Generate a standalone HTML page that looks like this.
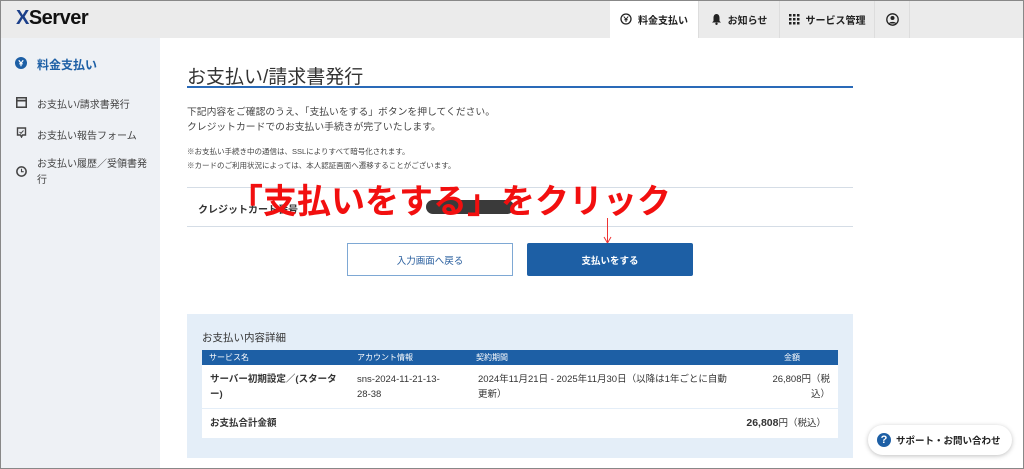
<!DOCTYPE html>
<html><head><meta charset="utf-8"><style>
*{margin:0;padding:0;box-sizing:border-box}
body{width:1024px;height:469px;overflow:hidden;font-family:"Liberation Sans","Noto Sans CJK JP",sans-serif;color:#333;background:#fff;position:relative}
.abs{position:absolute}
#frame{position:absolute;left:0;top:0;width:1024px;height:469px;border:1px solid #888;pointer-events:none;z-index:10}
#hdr{left:0;top:0;width:1024px;height:38px;background:#ebebeb}
.tab{top:0;height:38px;display:flex;align-items:center;justify-content:center;font-size:10px;font-weight:bold;color:#222;border-left:1px solid #ddd}
#side{left:0;top:38px;width:160px;height:431px;background:#eef1f5}
.sl{font-size:10px;color:#444;left:37px}
.si{left:16px;width:11px;height:11px}
</style></head><body>
<div id="hdr" class="abs"></div>
<div class="abs" style="left:16px;top:7px;font-size:20px;font-weight:bold;letter-spacing:-0.5px;color:#111"><span style="color:#1b3f8a">X</span>Server</div>
<div class="abs tab" style="left:610px;width:88px;background:#fff;border:none"><svg width="12" height="12" viewBox="0 0 12 12" style="margin-right:6px"><circle cx="6" cy="6" r="5" fill="none" stroke="#222" stroke-width="1.3"/><path d="M3.8 3.5 6 6.3 8.2 3.5M6 6.3V9M4.3 6.8H7.7" stroke="#222" fill="none" stroke-width="1"/></svg>料金支払い</div>
<div class="abs tab" style="left:698px;width:81px"><svg width="11" height="12" viewBox="0 0 11 12" style="margin-right:6px"><path d="M5.5 1C3.3 1 2.5 3 2.5 5V8L1 9.5H10L8.5 8V5C8.5 3 7.7 1 5.5 1Z" fill="#222"/><circle cx="5.5" cy="10.8" r="1.2" fill="#222"/></svg>お知らせ</div>
<div class="abs tab" style="left:779px;width:95px"><svg width="11" height="11" viewBox="0 0 11 11" style="margin-right:6px" fill="#222"><rect x="0" y="0" width="2.5" height="2.5"/><rect x="4" y="0" width="2.5" height="2.5"/><rect x="8" y="0" width="2.5" height="2.5"/><rect x="0" y="4" width="2.5" height="2.5"/><rect x="4" y="4" width="2.5" height="2.5"/><rect x="8" y="4" width="2.5" height="2.5"/><rect x="0" y="8" width="2.5" height="2.5"/><rect x="4" y="8" width="2.5" height="2.5"/><rect x="8" y="8" width="2.5" height="2.5"/></svg>サービス管理</div>
<div class="abs tab" style="left:874px;width:36px;border-right:1px solid #ddd"><svg width="13" height="13" viewBox="0 0 13 13"><circle cx="6.5" cy="6.5" r="5.7" fill="none" stroke="#222" stroke-width="1.3"/><circle cx="6.5" cy="5" r="2" fill="#222"/><path d="M2.8 10.5C3.5 8.3 9.5 8.3 10.2 10.5" fill="#222"/></svg></div>

<div id="side" class="abs"></div>
<svg class="abs" style="left:15px;top:57px" width="12" height="12" viewBox="0 0 12 12"><circle cx="6" cy="6" r="6" fill="#1d5fa5"/><path d="M3.8 3.3 6 6.2 8.2 3.3M6 6.2V9.2M4.2 6.8H7.8" stroke="#fff" fill="none" stroke-width="1.2"/></svg>
<div class="abs" style="left:37px;top:56px;font-size:12px;font-weight:bold;color:#1d5fa5">料金支払い</div>
<svg class="abs si" style="top:97px" viewBox="0 0 10 10"><rect x="0.7" y="0.7" width="8.6" height="8.6" fill="none" stroke="#444" stroke-width="1.4"/><rect x="0.7" y="2.5" width="8.6" height="1.6" fill="#444"/></svg>
<div class="abs sl" style="top:96px">お支払い/請求書発行</div>
<svg class="abs si" style="top:127px" viewBox="0 0 10 11"><path d="M1 1H9V8H6L5 10 4 8H1Z" fill="none" stroke="#444" stroke-width="1.4"/><path d="M3 5 4.5 6.3 7 3.5" fill="none" stroke="#444"/></svg>
<div class="abs sl" style="top:127px">お支払い報告フォーム</div>
<svg class="abs si" style="top:166px" viewBox="0 0 10 10"><circle cx="5" cy="5" r="4.2" fill="none" stroke="#444" stroke-width="1.4"/><path d="M5 2.5V5.2H7" fill="none" stroke="#444"/></svg>
<div class="abs sl" style="top:157px;line-height:16px;width:115px">お支払い履歴／受領書発行</div>

<div class="abs" style="left:187px;top:62px;font-size:19px;color:#333">お支払い/請求書発行</div>
<div class="abs" style="left:187px;top:86px;width:666px;height:2px;background:#2a6ab8"></div>
<div class="abs" style="left:187px;top:105px;font-size:9.8px;line-height:15px;color:#444">下記内容をご確認のうえ、「支払いをする」ボタンを押してください。<br>クレジットカードでのお支払い手続きが完了いたします。</div>
<div class="abs" style="left:187px;top:145px;font-size:7.5px;line-height:14px;color:#444">※お支払い手続き中の通信は、SSLによりすべて暗号化されます。<br>※カードのご利用状況によっては、本人認証画面へ遷移することがございます。</div>
<div class="abs" style="left:187px;top:187px;width:666px;height:1px;background:#d5dde6"></div>
<div class="abs" style="left:187px;top:226px;width:666px;height:1px;background:#d5dde6"></div>
<div class="abs" style="left:198px;top:201px;font-size:10px;font-weight:bold;color:#333">クレジットカード番号</div>
<div class="abs" style="left:426px;top:200px;width:88px;height:14px;border-radius:7px;background:#3a3a3a"></div>
<div class="abs" style="left:229px;top:174px;font-size:34px;font-weight:bold;color:#f20f0f;white-space:nowrap;letter-spacing:0">「支払いをする」をクリック</div>
<div class="abs" style="left:607px;top:218px;width:1px;height:24px;background:#e33"></div>
<svg class="abs" style="left:603px;top:236px" width="9" height="8" viewBox="0 0 9 8"><path d="M1 1 4.5 7 8 1" fill="none" stroke="#e33"/></svg>
<div class="abs" style="left:347px;top:243px;width:166px;height:33px;border:1px solid #7ea8d4;display:flex;align-items:center;justify-content:center;font-size:9.5px;color:#2a5f9e">入力画面へ戻る</div>
<div class="abs" style="left:527px;top:243px;width:166px;height:33px;background:#1d5fa5;border-radius:2px;display:flex;align-items:center;justify-content:center;font-size:9.5px;font-weight:bold;color:#fff">支払いをする</div>

<div class="abs" style="left:187px;top:314px;width:666px;height:144px;background:#e4eef8"></div>
<div class="abs" style="left:202px;top:330px;font-size:10.5px;color:#333">お支払い内容詳細</div>
<div class="abs" style="left:202px;top:350px;width:636px;height:15px;background:#1d5fa5;color:#fff;font-size:8px;line-height:15px">
<span class="abs" style="left:7px">サービス名</span><span class="abs" style="left:155px">アカウント情報</span><span class="abs" style="left:274px">契約期間</span><span class="abs" style="left:582px">金額</span></div>
<div class="abs" style="left:202px;top:365px;width:636px;height:43px;background:#fff;font-size:9.5px;line-height:15px;color:#333">
<span class="abs" style="left:8px;top:7px;width:135px;font-weight:bold">サーバー初期設定／(スターター)</span>
<span class="abs" style="left:155px;top:7px;width:84px;word-break:break-all">sns-2024-11-21-13-28-38</span>
<span class="abs" style="left:276px;top:7px;width:258px">2024年11月21日 - 2025年11月30日（以降は1年ごとに自動更新）</span>
<span class="abs" style="left:560px;top:7px;width:68px;text-align:right">26,808円（税込）</span></div>
<div class="abs" style="left:202px;top:409px;width:636px;height:29px;background:#fff;font-size:9.5px;line-height:29px">
<span class="abs" style="left:8px;font-weight:bold">お支払合計金額</span>
<span class="abs" style="right:12px"><b style="font-size:10.5px">26,808</b>円（税込）</span></div>

<div class="abs" style="left:868px;top:425px;width:144px;height:30px;border-radius:15px;background:#fff;box-shadow:0 1px 5px rgba(0,0,0,.25);display:flex;align-items:center;padding-left:9px;font-size:9.5px;font-weight:bold;color:#222">
<span style="width:14px;height:14px;border-radius:7px;background:#1d5fa5;color:#fff;font-size:11px;line-height:14px;text-align:center;margin-right:5px">?</span>サポート・お問い合わせ</div>
<div id="frame"></div>
</body></html>
